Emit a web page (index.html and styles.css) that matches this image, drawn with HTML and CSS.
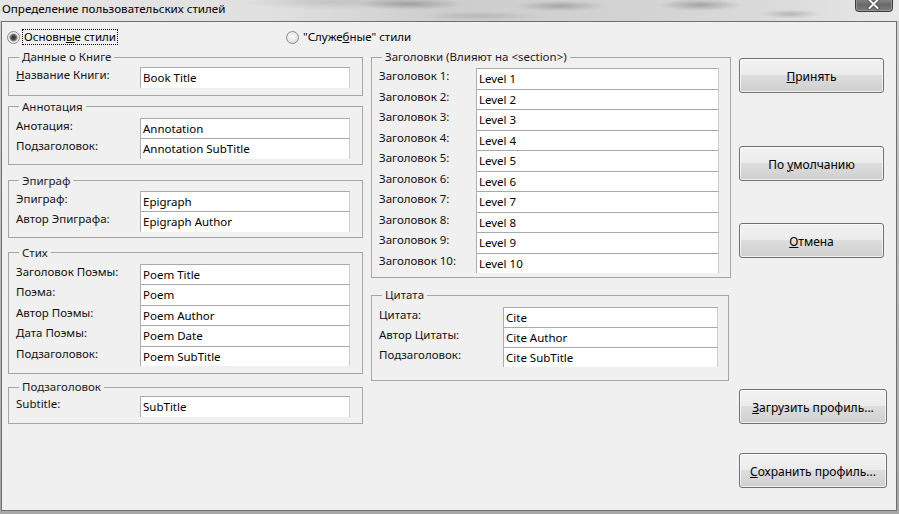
FILE: index.html
```html
<!DOCTYPE html>
<html lang="ru">
<head>
<meta charset="utf-8">
<title>Определение пользовательских стилей</title>
<link rel="stylesheet" href="styles.css">
</head>
<body>
<div class="window">
  <div class="titlebar">
    <span class="title">Определение пользовательских стилей</span>
    <div class="close-btn">
      <svg width="38" height="12" viewBox="0 0 38 12">
        <defs>
          <linearGradient id="cg" x1="0" y1="0" x2="0" y2="1">
            <stop offset="0" stop-color="#8c8c8c"/>
            <stop offset="0.5" stop-color="#6a6a6a"/>
            <stop offset="1" stop-color="#7e7e7e"/>
          </linearGradient>
        </defs>
        <path d="M0.5 -2 V8.5 Q0.5 11.5 3.5 11.5 H34.5 Q37.5 11.5 37.5 8.5 V-2 Z" fill="url(#cg)" stroke="#3c3c3c"/>
        <path d="M1.5 -1 V8 Q1.5 10.5 4 10.5 H34 Q36.5 10.5 36.5 8 V-1" fill="none" stroke="#a8a8a8" stroke-opacity="0.6"/>
        <path d="M14.5 0 L22.5 8 M22.5 0 L14.5 8" stroke="#4a4a4a" stroke-width="3.6" stroke-linecap="square"/>
        <path d="M14.5 0 L22.5 8 M22.5 0 L14.5 8" stroke="#f4f4f4" stroke-width="2" stroke-linecap="square"/>
      </svg>
    </div>
  </div>
  <div class="client">
    <div class="radio-row">
      <label class="radio radio-main"><span class="radio-dot checked"></span><span class="radio-text focus">Основн<u>ы</u>е стили</span></label>
      <label class="radio"><span class="radio-dot"></span><span class="radio-text">"Служе<u>б</u>ные" стили</span></label>
    </div>
    <div class="columns">
      <div class="col col-left">
        <fieldset class="group g-left g-book">
          <legend>Данные о Книге</legend>
          <div class="rows">
            <div class="row"><span class="lbl"><u>Н</u>азвание Книги:</span><span class="field">Book Title</span></div>
          </div>
        </fieldset>
        <fieldset class="group g-left g-annot">
          <legend>Аннотация</legend>
          <div class="rows">
            <div class="row"><span class="lbl">Анотация:</span><span class="field">Annotation</span></div>
            <div class="row"><span class="lbl">Подзаголовок:</span><span class="field">Annotation SubTitle</span></div>
          </div>
        </fieldset>
        <fieldset class="group g-left g-epi">
          <legend>Эпиграф</legend>
          <div class="rows">
            <div class="row"><span class="lbl">Эпиграф:</span><span class="field">Epigraph</span></div>
            <div class="row"><span class="lbl">Автор Эпиграфа:</span><span class="field">Epigraph Author</span></div>
          </div>
        </fieldset>
        <fieldset class="group g-left g-poem">
          <legend>Стих</legend>
          <div class="rows">
            <div class="row"><span class="lbl">Заголовок Поэмы:</span><span class="field">Poem Title</span></div>
            <div class="row"><span class="lbl">Поэма:</span><span class="field">Poem</span></div>
            <div class="row"><span class="lbl">Автор Поэмы:</span><span class="field">Poem Author</span></div>
            <div class="row"><span class="lbl">Дата Поэмы:</span><span class="field">Poem Date</span></div>
            <div class="row"><span class="lbl">Подзаголовок:</span><span class="field">Poem SubTitle</span></div>
          </div>
        </fieldset>
        <fieldset class="group g-left g-sub">
          <legend>Подзаголовок</legend>
          <div class="rows">
            <div class="row"><span class="lbl">Subtitle:</span><span class="field">SubTitle</span></div>
          </div>
        </fieldset>
      </div>
      <div class="col col-mid">
        <fieldset class="group g-head">
          <legend>Заголовки (Влияют на &lt;section&gt;)</legend>
          <div class="rows">
            <div class="row"><span class="lbl">Заголовок 1:</span><span class="field">Level 1</span></div>
            <div class="row"><span class="lbl">Заголовок 2:</span><span class="field">Level 2</span></div>
            <div class="row"><span class="lbl">Заголовок 3:</span><span class="field">Level 3</span></div>
            <div class="row"><span class="lbl">Заголовок 4:</span><span class="field">Level 4</span></div>
            <div class="row"><span class="lbl">Заголовок 5:</span><span class="field">Level 5</span></div>
            <div class="row"><span class="lbl">Заголовок 6:</span><span class="field">Level 6</span></div>
            <div class="row"><span class="lbl">Заголовок 7:</span><span class="field">Level 7</span></div>
            <div class="row"><span class="lbl">Заголовок 8:</span><span class="field">Level 8</span></div>
            <div class="row"><span class="lbl">Заголовок 9:</span><span class="field">Level 9</span></div>
            <div class="row"><span class="lbl">Заголовок 10:</span><span class="field">Level 10</span></div>
          </div>
        </fieldset>
        <fieldset class="group g-cite">
          <legend>Цитата</legend>
          <div class="rows">
            <div class="row"><span class="lbl">Цитата:</span><span class="field">Cite</span></div>
            <div class="row"><span class="lbl">Автор Цитаты:</span><span class="field">Cite Author</span></div>
            <div class="row"><span class="lbl">Подзаголовок:</span><span class="field">Cite SubTitle</span></div>
          </div>
        </fieldset>
      </div>
      <div class="col col-buttons">
        <button class="btn btn-accept"><span><u>П</u>ринять</span></button>
        <button class="btn btn-default"><span>По <u>у</u>молчанию</span></button>
        <button class="btn btn-cancel"><span><u>О</u>тмена</span></button>
        <button class="btn btn-wide btn-load"><span><u>З</u>агрузить профиль...</span></button>
        <button class="btn btn-wide btn-save"><span><u>С</u>охранить профиль...</span></button>
      </div>
    </div>
  </div>
</div>
</body>
</html>
```

FILE: styles.css
```css
* { box-sizing: border-box; }
html, body { margin: 0; padding: 0; }
body {
  width: 899px;
  height: 514px;
  overflow: hidden;
  background: #b4b4b4;
  font-family: "Noto Sans", "DejaVu Sans", sans-serif;
  font-size: 11.5px;
  color: #000;
}
.window {
  width: 899px;
  height: 514px;
  display: flex;
  flex-direction: column;
  background: linear-gradient(#d0d0d0, #a6a6a6);
}
.titlebar {
  height: 21px;
  flex: none;
  display: flex;
  justify-content: space-between;
  align-items: flex-start;
  background:
    radial-gradient(ellipse 70px 8px at 410px 4px, rgba(70,70,70,.35), transparent 75%),
    radial-gradient(ellipse 60px 7px at 560px 6px, rgba(70,70,70,.3), transparent 75%),
    radial-gradient(ellipse 55px 8px at 700px 5px, rgba(70,70,70,.35), transparent 75%),
    radial-gradient(ellipse 40px 6px at 790px 14px, rgba(70,70,70,.25), transparent 75%),
    radial-gradient(ellipse 80px 6px at 480px 16px, rgba(90,90,90,.2), transparent 75%),
    radial-gradient(ellipse 120px 10px at 330px 2px, rgba(90,90,90,.18), transparent 75%),
    linear-gradient(to right, #e6e6e6 0%, #e0e0e0 30%, #cdcdcd 50%, #d2d2d2 70%, #dcdcdc 88%, #e8e8e8 100%);
}
.title {
  padding-left: 2px;
  font-size: 11.6px;
  line-height: 17px;
  white-space: nowrap;
}
.close-btn {
  width: 38px;
  height: 12px;
  margin-right: 6px;
  display: flex;
}
.client {
  flex: none;
  width: 896px;
  height: 490px;
  margin-left: 1px;
  border: 1px solid #6f6f6f;
  background: #f0f0f0;
  padding-top: 7px;
}

/* radios */
.radio-row {
  display: flex;
  height: 16px;
  padding-left: 5px;
}
.radio {
  display: flex;
  align-items: center;
}
.radio-main { width: 279px; }
.radio-dot {
  width: 13px;
  height: 13px;
  border-radius: 50%;
  border: 1px solid #8a8a8a;
  margin-right: 2px;
  background: radial-gradient(circle at 45% 40%, #fafafa 0, #e6e6e6 55%, #cfcfcf 100%);
}
.radio-dot.checked {
  background: radial-gradient(circle at 50% 50%, #2e2e2e 0, #4a4a4a 2px, #6f6f6f 3px, #9a9a9a 3.6px, #e4e4e4 4.4px, #f6f6f6 6px);
}
.radio-text {
  line-height: 14px;
  padding: 0 1px;
  border: 1px solid transparent;
  white-space: nowrap;
}
.radio-text.focus { border: 1px dotted #000; }

/* columns */
.columns {
  display: flex;
  gap: 8px;
  padding-left: 6px;
  margin-top: 5px;
}
.col { display: flex; flex-direction: column; }
.col-left { width: 355px; }
.col-mid { width: 360px; }
.col-buttons { width: 149px; align-items: flex-start; }

/* group boxes */
.group {
  margin: 0;
  min-width: 0;
  border: 1px solid #a6a6a6;
  padding: 3px 12px 7px 7px;
}
.group legend {
  padding: 0 3px;
  margin-left: 3px;
  line-height: 14px;
  color: #1a1a1a;
}
.rows { display: flex; flex-direction: column; }
.row { display: flex; height: 20.5px; }
.g-cite .row { height: 20px; }
.lbl {
  flex: none;
  width: 124px;
  line-height: 16px;
  white-space: nowrap;
  color: #111;
}
.g-head .lbl { width: 97px; }
.field {
  flex: 1;
  min-width: 0;
  background: #fff;
  border-top: 1px solid #a9a9a9;
  border-left: 1px solid #adadad;
  border-right: 1px solid #cdcdcd;
  padding: 0 2px;
  line-height: 19px;
  white-space: nowrap;
  overflow: hidden;
}

.g-book  { padding-top: 3px; padding-bottom: 7px; }
.g-annot { margin-top: 4px; padding-top: 4px; padding-bottom: 5px; }
.g-epi   { margin-top: 9px; padding-top: 3px; padding-bottom: 5px; }
.g-poem  { margin-top: 8px; padding-top: 4px; padding-bottom: 7px; }
.g-sub   { margin-top: 6px; padding-top: 2px; padding-bottom: 6px; }
.g-head  { padding: 4px 11px 4px 7px; }
.g-cite  { margin-top: 10px; margin-right: 2px; padding: 5px 10px 13px 7px; }

/* buttons */
.btn {
  width: 145px;
  height: 35px;
  padding: 2px 0 0;
  border: 1px solid #707070;
  border-radius: 3px;
  background: linear-gradient(#f2f2f2 0%, #ebebeb 50%, #dddddd 50%, #cfcfcf 100%);
  box-shadow: inset 0 0 0 1px rgba(255,255,255,.7);
  font: inherit;
  font-size: 12px;
  color: #000;
  display: flex;
  align-items: center;
  justify-content: center;
}
.btn-wide { width: 148px; }
.btn-accept  { margin-top: 8px; }
.btn-default { margin-top: 53px; }
.btn-cancel  { margin-top: 42px; }
.btn-load    { margin-top: 131px; }
.btn-save    { margin-top: 29px; }
```
